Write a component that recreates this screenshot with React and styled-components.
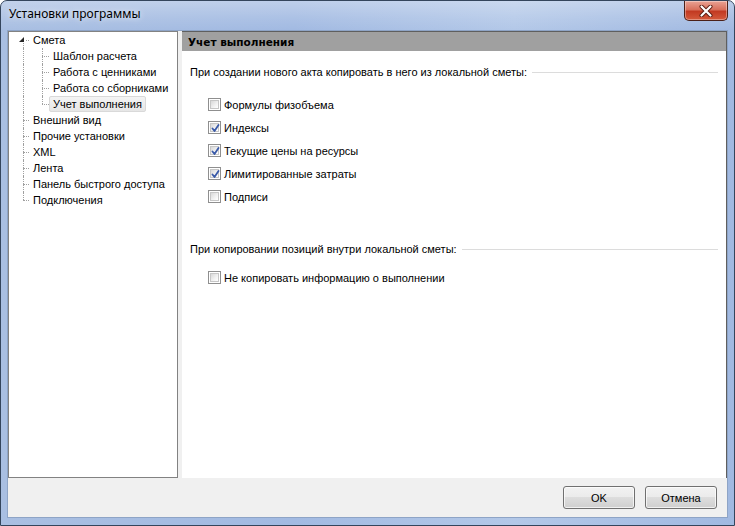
import React from "react";
import styled, { createGlobalStyle } from "styled-components";

const Global = createGlobalStyle`
  html, body { margin: 0; padding: 0; }
  body { width: 735px; height: 526px; overflow: hidden; background: #fff; }
  * { box-sizing: border-box; }
`;

const Window = styled.div`
  width: 735px;
  height: 526px;
  display: flex;
  flex-direction: column;
  border: 1px solid #34455c;
  border-radius: 7px 7px 0 0;
  background: linear-gradient(90deg, #a9bfe2 0%, #a2bae2 40%, #b3c8e8 70%, #a1b9e1 100%);
  font-family: "Liberation Sans", Arial, sans-serif;
  overflow: hidden;
`;

const TitleBar = styled.div`
  height: 29px;
  display: flex;
  align-items: flex-start;
  padding-left: 8px;
  background: linear-gradient(180deg, rgba(255,255,255,0.3) 0%, rgba(255,255,255,0.1) 60%, rgba(255,255,255,0) 100%);
`;

const Title = styled.div`
  font-family: "Noto Sans", "Liberation Sans", sans-serif;
  font-size: 12px;
  line-height: 16px;
  margin-top: 5px;
  color: #000;
  text-shadow: 0 0 6px rgba(255,255,255,0.9);
`;

const CloseButton = styled.div`
  margin-left: auto;
  margin-right: 6px;
  width: 44px;
  height: 20px;
  border: 1px solid #4b2018;
  border-top: none;
  border-radius: 0 0 5px 5px;
  background: linear-gradient(180deg, #e9a395 0%, #d8705c 45%, #c23a22 55%, #d45a3c 100%);
  box-shadow: inset 0 0 0 1px rgba(255,255,255,0.35);
  display: flex;
  align-items: center;
  justify-content: center;
`;

const Client = styled.div`
  flex: 1;
  margin: 0 6px 7px 6px;
  border: 1px solid #8ea4c6;
  background: #f0f0f0;
  display: flex;
  flex-direction: column;
`;

const Main = styled.div`
  height: 447px;
  display: flex;
  gap: 4px;
`;

const TreeBox = styled.div`
  width: 170px;
  background: #fff;
  border: 1px solid #828282;
  padding: 0 0 0 5px;
  font-size: 11px;
  color: #000;
`;

const Row = styled.div`
  height: 16px;
  display: flex;
  align-items: stretch;
`;

const Guide = styled.div`
  position: relative;
  width: ${(p) => p.$w}px;
  flex: none;
  &::before {
    content: "";
    display: ${(p) => (p.$v === "none" ? "none" : "block")};
    position: absolute;
    left: ${(p) => p.$x}px;
    top: ${(p) => (p.$v === "bottom" ? "9px" : "0")};
    height: ${(p) => (p.$v === "top" ? "8px" : p.$v === "bottom" ? "7px" : "16px")};
    border-left: 1px dotted #a0a0a0;
  }
  &::after {
    content: "";
    display: ${(p) => (p.$h ? "block" : "none")};
    position: absolute;
    left: ${(p) => p.$hx ?? p.$x}px;
    right: 0;
    top: 8px;
    border-top: 1px dotted #a0a0a0;
  }
`;

const Expander = styled.svg`
  position: absolute;
  left: 5px;
  top: 5px;
`;

const Label = styled.div`
  display: flex;
  align-items: center;
  padding: 0 3px;
  border: 1px solid ${(p) => (p.$sel ? "#d9d9d9" : "transparent")};
  border-radius: 2px;
  background: ${(p) => (p.$sel ? "linear-gradient(180deg, #f4f4f4, #e6e6e6)" : "transparent")};
  white-space: nowrap;
  line-height: 14px;
`;

const Panel = styled.div`
  flex: 1;
  display: flex;
  flex-direction: column;
  background: #fff;
  border-top: 1px solid #5f5f5f;
  border-right: 1px solid #5f5f5f;
`;

const PanelHeader = styled.div`
  height: 19px;
  background: #a0a0a0;
  padding-left: 6px;
  display: flex;
  align-items: center;
  font-family: "DejaVu Sans", sans-serif;
  font-weight: bold;
  font-size: 10.5px;
  color: #000;
`;

const PanelBody = styled.div`
  padding: 14px 8px 0 8px;
  font-size: 11px;
  color: #000;
`;

const GroupHead = styled.div`
  height: 14px;
  display: flex;
  align-items: center;
  margin-top: ${(p) => p.$mt || 0}px;
  white-space: nowrap;
  &::after {
    content: "";
    flex: 1;
    margin-left: 5px;
    border-top: 1px solid #dcdcdc;
  }
`;

const CheckList = styled.div`
  margin-top: ${(p) => p.$mt}px;
  padding-left: 18px;
`;

const CheckItem = styled.div`
  height: 23px;
  display: flex;
  align-items: center;
  gap: 3px;
`;

const Box = styled.div`
  width: 13px;
  height: 13px;
  border: 1px solid #8f8f8f;
  background: #fff;
  padding: 1px;
  display: flex;
`;

const BoxInner = styled.div`
  flex: 1;
  border: 1px solid #c6c6c6;
  background: linear-gradient(135deg, #d8d8d8 0%, #f2f2f2 60%, #ffffff 100%);
  position: relative;
`;

const CheckMark = styled.svg`
  position: absolute;
  left: 0;
  top: 0;
`;

const Footer = styled.div`
  flex: 1;
  display: flex;
  justify-content: flex-end;
  align-items: flex-start;
  padding: 8px 10px 0 0;
  gap: 10px;
`;

const Button = styled.button`
  width: 72px;
  height: 23px;
  border: 1px solid #707070;
  border-radius: 3px;
  background: linear-gradient(180deg, #f2f2f2 0%, #ebebeb 49%, #dddddd 50%, #cfcfcf 100%);
  box-shadow: inset 0 0 0 1px rgba(255,255,255,0.7);
  font-family: "Liberation Sans", Arial, sans-serif;
  font-size: 11px;
  color: #000;
  padding: 0;
`;

const tree = [
  { label: "Смета", root: true, expander: true },
  { label: "Шаблон расчета", child: true },
  { label: "Работа с ценниками", child: true },
  { label: "Работа со сборниками", child: true },
  { label: "Учет выполнения", child: true, lastChild: true, sel: true },
  { label: "Внешний вид", root: true },
  { label: "Прочие установки", root: true },
  { label: "XML", root: true },
  { label: "Лента", root: true },
  { label: "Панель быстрого доступа", root: true },
  { label: "Подключения", root: true, last: true },
];

function TreeRow({ item }) {
  if (item.child) {
    return (
      <Row>
        <Guide $w={15} $x={9} $v="full" />
        <Guide $w={20} $x={13} $v={item.lastChild ? "top" : "full"} $h />
        <Label $sel={item.sel}>{item.label}</Label>
      </Row>
    );
  }
  if (item.expander) {
    return (
      <Row>
        <Guide $w={15} $x={9} $v="bottom" $h $hx={12}>
          <Expander width="6" height="6" viewBox="0 0 6 6">
            <polygon points="5,0 5,5 0,5" fill="#262626" />
          </Expander>
        </Guide>
        <Label>{item.label}</Label>
      </Row>
    );
  }
  return (
    <Row>
      <Guide $w={15} $x={9} $v={item.last ? "top" : "full"} $h />
      <Label>{item.label}</Label>
    </Row>
  );
}

function Check({ checked, label }) {
  return (
    <CheckItem>
      <Box>
        <BoxInner>
          {checked && (
            <CheckMark width="9" height="9" viewBox="0 0 9 9">
              <path d="M1.5 4.5 L3.5 7 L7.5 1" fill="none" stroke="#3a5aa8" strokeWidth="1.8" strokeLinecap="round" strokeLinejoin="round" />
            </CheckMark>
          )}
        </BoxInner>
      </Box>
      <span>{label}</span>
    </CheckItem>
  );
}

export default function App() {
  return (
    <>
      <Global />
      <Window>
        <TitleBar>
          <Title>Установки программы</Title>
          <CloseButton>
            <svg width="14" height="12" viewBox="0 0 14 12">
              <path d="M2.5 1.5 L11.5 10.5 M11.5 1.5 L2.5 10.5" stroke="#5a1c12" strokeWidth="4" strokeLinecap="round" />
              <path d="M2.5 1.5 L11.5 10.5 M11.5 1.5 L2.5 10.5" stroke="#fff" strokeWidth="2.2" strokeLinecap="round" />
            </svg>
          </CloseButton>
        </TitleBar>
        <Client>
          <Main>
            <TreeBox>
              {tree.map((it) => (
                <TreeRow key={it.label} item={it} />
              ))}
            </TreeBox>
            <Panel>
              <PanelHeader>Учет выполнения</PanelHeader>
              <PanelBody>
                <GroupHead>При создании нового акта копировать в него из локальной сметы:</GroupHead>
                <CheckList $mt={14}>
                  <Check label="Формулы физобъема" />
                  <Check checked label="Индексы" />
                  <Check checked label="Текущие цены на ресурсы" />
                  <Check checked label="Лимитированные затраты" />
                  <Check label="Подписи" />
                </CheckList>
                <GroupHead $mt={34}>При копировании позиций внутри локальной сметы:</GroupHead>
                <CheckList $mt={10}>
                  <Check label="Не копировать информацию о выполнении" />
                </CheckList>
              </PanelBody>
            </Panel>
          </Main>
          <Footer>
            <Button>OK</Button>
            <Button>Отмена</Button>
          </Footer>
        </Client>
      </Window>
    </>
  );
}
